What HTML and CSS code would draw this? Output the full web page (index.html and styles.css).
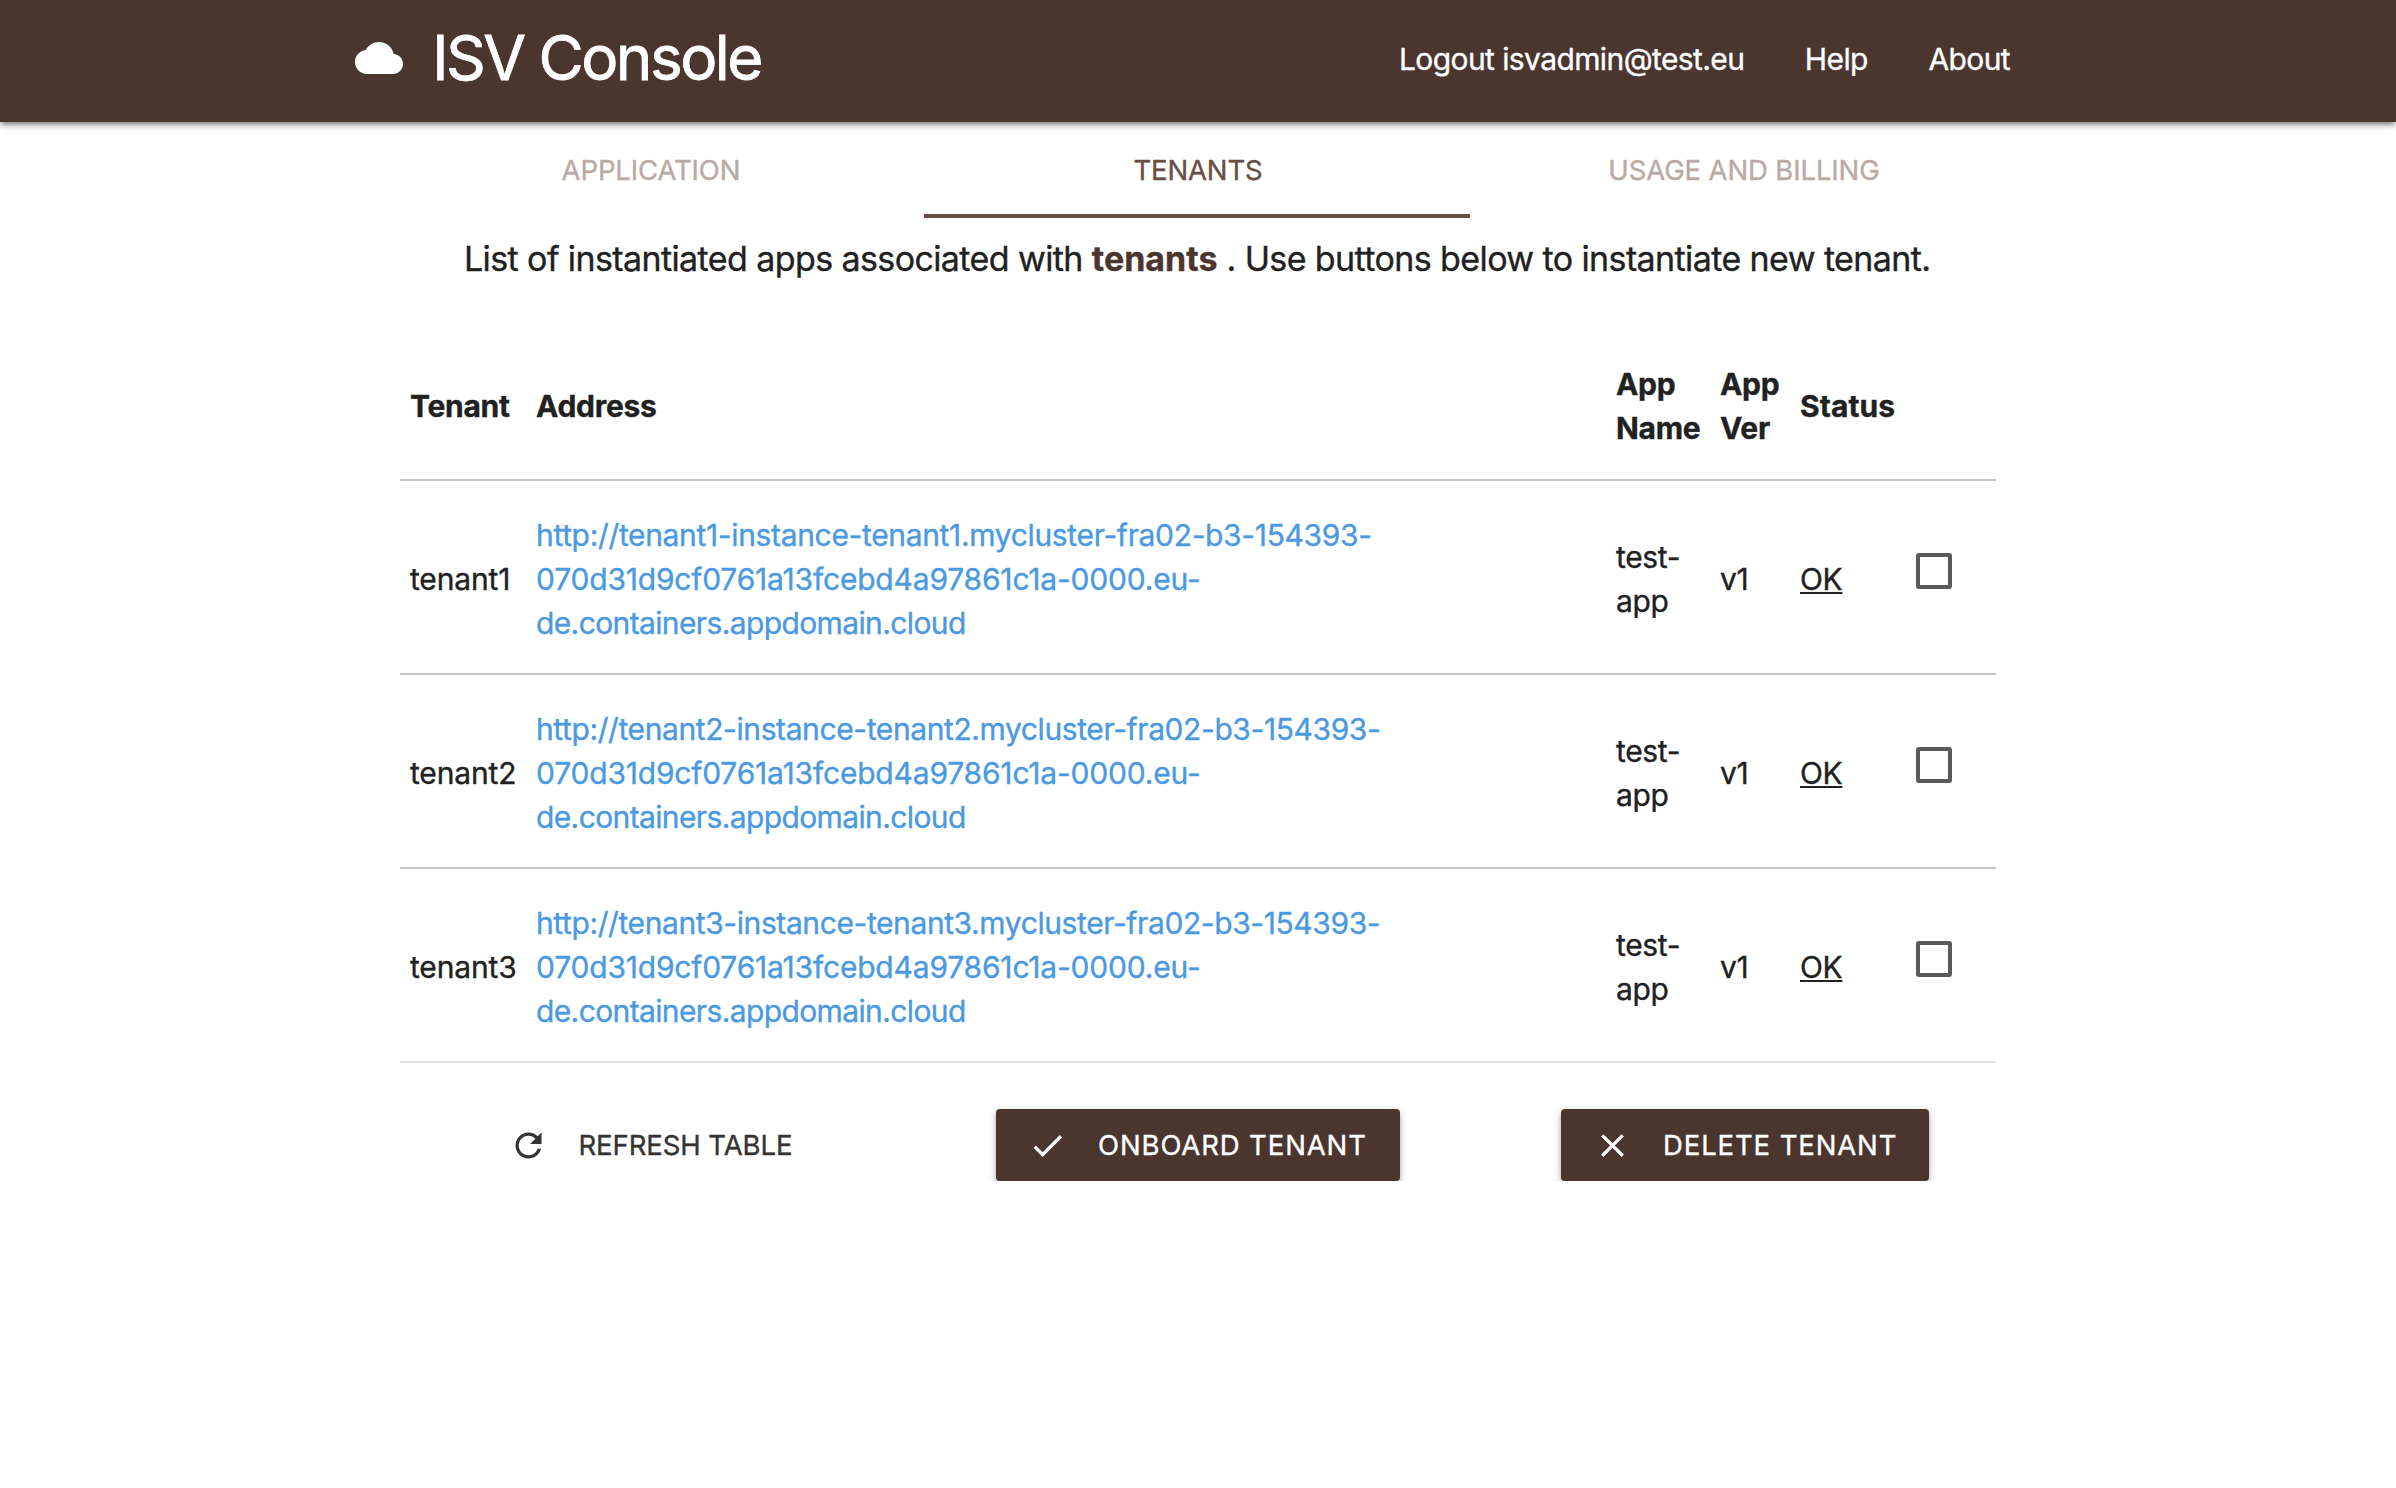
FILE: index.html
```html
<!DOCTYPE html>
<html lang="en">
<head>
<meta charset="utf-8">
<title>ISV Console</title>
<link rel="stylesheet" href="styles.css">
</head>
<body>
<header class="navbar">
  <a class="brand">
    <svg class="cloud" viewBox="0 0 24 24"><path d="M19.35 10.04C18.67 6.59 15.64 4 12 4 9.11 4 6.6 5.64 5.35 8.04 2.34 8.36 0 10.91 0 14c0 3.31 2.69 6 6 6h13c2.76 0 5-2.24 5-5 0-2.64-2.05-4.78-4.65-4.96z"/></svg>
    <span class="brand-name">ISV Console</span>
  </a>
  <nav class="menu"><a>Logout isvadmin@test.eu</a><a>Help</a><a>About</a></nav>
</header>
<main>
  <div class="tabs">
    <a class="tab">APPLICATION</a>
    <a class="tab active">TENANTS</a>
    <a class="tab">USAGE AND BILLING</a>
  </div>
  <p class="intro">List of instantiated apps associated with <b>tenants</b> . Use buttons below to instantiate new tenant.</p>
  <table class="tenants">
    <colgroup><col class="c-tenant"><col class="c-address"><col class="c-name"><col class="c-ver"><col class="c-status"><col class="c-check"></colgroup>
    <thead>
      <tr><th>Tenant</th><th>Address</th><th>App<br>Name</th><th>App<br>Ver</th><th class="wide">Status</th><th></th></tr>
    </thead>
    <tbody>
      <tr>
        <td class="id">tenant1</td>
        <td><a class="url"><span class="host first">http://tenant1-instance-tenant1.mycluster-fra02-b3-154393-</span><span class="hash">070d31d9cf0761a13fcebd4a97861c1a-0000.eu-</span><span>de.containers.appdomain.cloud</span></a></td>
        <td>test-<br>app</td><td>v1</td><td><a class="status">OK</a></td><td class="pick"><span class="checkbox"></span></td>
      </tr>
      <tr>
        <td class="id">tenant2</td>
        <td><a class="url"><span class="host">http://tenant2-instance-tenant2.mycluster-fra02-b3-154393-</span><span class="hash">070d31d9cf0761a13fcebd4a97861c1a-0000.eu-</span><span>de.containers.appdomain.cloud</span></a></td>
        <td>test-<br>app</td><td>v1</td><td><a class="status">OK</a></td><td class="pick"><span class="checkbox"></span></td>
      </tr>
      <tr>
        <td class="id">tenant3</td>
        <td><a class="url"><span class="host">http://tenant3-instance-tenant3.mycluster-fra02-b3-154393-</span><span class="hash">070d31d9cf0761a13fcebd4a97861c1a-0000.eu-</span><span>de.containers.appdomain.cloud</span></a></td>
        <td>test-<br>app</td><td>v1</td><td><a class="status">OK</a></td><td class="pick"><span class="checkbox"></span></td>
      </tr>
    </tbody>
  </table>
  <div class="actions">
    <a class="btn flat"><svg class="icon" viewBox="0 0 24 24"><path d="M17.65 6.35C16.2 4.9 14.21 4 12 4c-4.42 0-7.99 3.58-7.99 8s3.57 8 7.99 8c3.73 0 6.84-2.55 7.73-6h-2.08c-.82 2.33-3.04 4-5.65 4-3.31 0-6-2.69-6-6s2.69-6 6-6c1.66 0 3.14.69 4.22 1.78L13 11h7V4l-2.35 2.35z"/></svg>REFRESH TABLE</a>
    <a class="btn onboard"><svg class="icon" viewBox="0 0 24 24"><path d="M9 16.17L4.83 12l-1.42 1.41L9 19 21 7l-1.41-1.41z"/></svg>ONBOARD TENANT</a>
    <a class="btn delete"><svg class="icon" viewBox="0 0 24 24"><path d="M19 6.41L17.59 5 12 10.59 6.41 5 5 6.41 10.59 12 5 17.59 6.41 19 12 13.41 17.59 19 19 17.59 13.41 12z"/></svg>DELETE TENANT</a>
  </div>
</main>
</body>
</html>
```
FILE: styles.css
```css
* { box-sizing: border-box; }

body {
  margin: 0;
  background: #fff;
  color: #212121;
  font: 30px/44px Inter, "Liberation Sans", sans-serif;
  -webkit-text-stroke: .35px currentColor;
}

svg { display: block; fill: currentColor; flex: none; }

/* Top bar */
.navbar {
  display: flex;
  justify-content: space-between;
  height: 122px;
  padding: 0 386px 0 355px;
  background: #4a352f;
  color: #fff;
  box-shadow: 0 4px 4px 0 rgba(0,0,0,.2), 0 6px 2px -4px rgba(0,0,0,.16), 0 2px 10px 0 rgba(0,0,0,.2);
}
.brand { display: flex; align-items: flex-start; }
.cloud { width: 48px; height: 48px; margin: 34px 29px 0 0; }
.brand-name { font-size: 62px; line-height: 115px; letter-spacing: -2.54px; white-space: nowrap; -webkit-text-stroke-width: .8px; }
.menu { display: flex; gap: 60.5px; line-height: 118px; letter-spacing: -.6px; white-space: nowrap; }

/* Tabs */
.tabs {
  display: grid;
  grid-template-columns: 546px 546px 548px;
  margin-left: 378px;
  height: 96px;
}
.tab {
  height: 96px;
  border-bottom: 4px solid transparent;
  color: #b9aaa4;
  font-size: 27.5px;
  line-height: 96px;
  letter-spacing: -.12px;
  text-align: center;
}
.tab.active { padding-left: 2px; color: #694e44; border-bottom-color: #694e44; }

.intro {
  margin: 15px 0 47px 464px;
  font-size: 34px;
  line-height: 51px;
  letter-spacing: -.6px;
  white-space: nowrap;
}
.intro b { color: #4a352f; letter-spacing: 0; }

/* Tenant table */
.tenants {
  width: 1596px;
  margin-left: 400px;
  table-layout: fixed;
  border-spacing: 0;
}
.c-tenant { width: 126px; }
.c-address { width: 1080px; }
.c-name { width: 104px; }
.c-ver { width: 80px; }
.c-status { width: 116px; }
.c-check { width: 90px; }
th, td {
  padding: 32px 0 28px 10px;
  border-bottom: 2px solid #c4c4c4;
  text-align: left;
  vertical-align: middle;
  white-space: nowrap;
  letter-spacing: -.35px;
}
th { padding: 31px 0 29px 10px; letter-spacing: -.28px; }
th.wide { letter-spacing: .1px; }
tbody tr:last-child td { border-bottom-color: #e0e0e0; }
td.id { letter-spacing: -.15px; }
.url { color: #4b99e0; letter-spacing: -.62px; }
.url span { display: block; }
.url .host { letter-spacing: -.4px; }
.url .host.first { letter-spacing: -.34px; }
.url .hash { letter-spacing: -.19px; }
.status { text-decoration: underline; text-decoration-thickness: 2px; text-underline-offset: 2px; text-decoration-skip-ink: none; }
td.pick { padding: 72px 0 0 10px; vertical-align: top; }
.checkbox { display: block; width: 36px; height: 36px; border: 4px solid #5a5a5a; border-radius: 3px; }

/* Action buttons */
.actions {
  display: grid;
  grid-template-columns: repeat(3, 547px);
  justify-items: center;
  margin: 46px 0 0 377.5px;
}
.btn {
  display: flex;
  align-items: center;
  gap: 31px;
  height: 72px;
  padding: 0 32px;
  border-radius: 4px;
  background: #4a352f;
  color: #fff;
  font-size: 27.5px;
  letter-spacing: .88px;
  white-space: nowrap;
  box-shadow: 0 4px 4px 0 rgba(0,0,0,.2), 0 6px 2px -4px rgba(0,0,0,.16), 0 2px 10px 0 rgba(0,0,0,.2);
}
.icon { width: 39px; height: 39px; }
.onboard { width: 404px; }
.delete { width: 368px; }
.flat { width: 347px; padding-left: 31px; background: none; color: #343434; letter-spacing: -.08px; box-shadow: none; }
```
